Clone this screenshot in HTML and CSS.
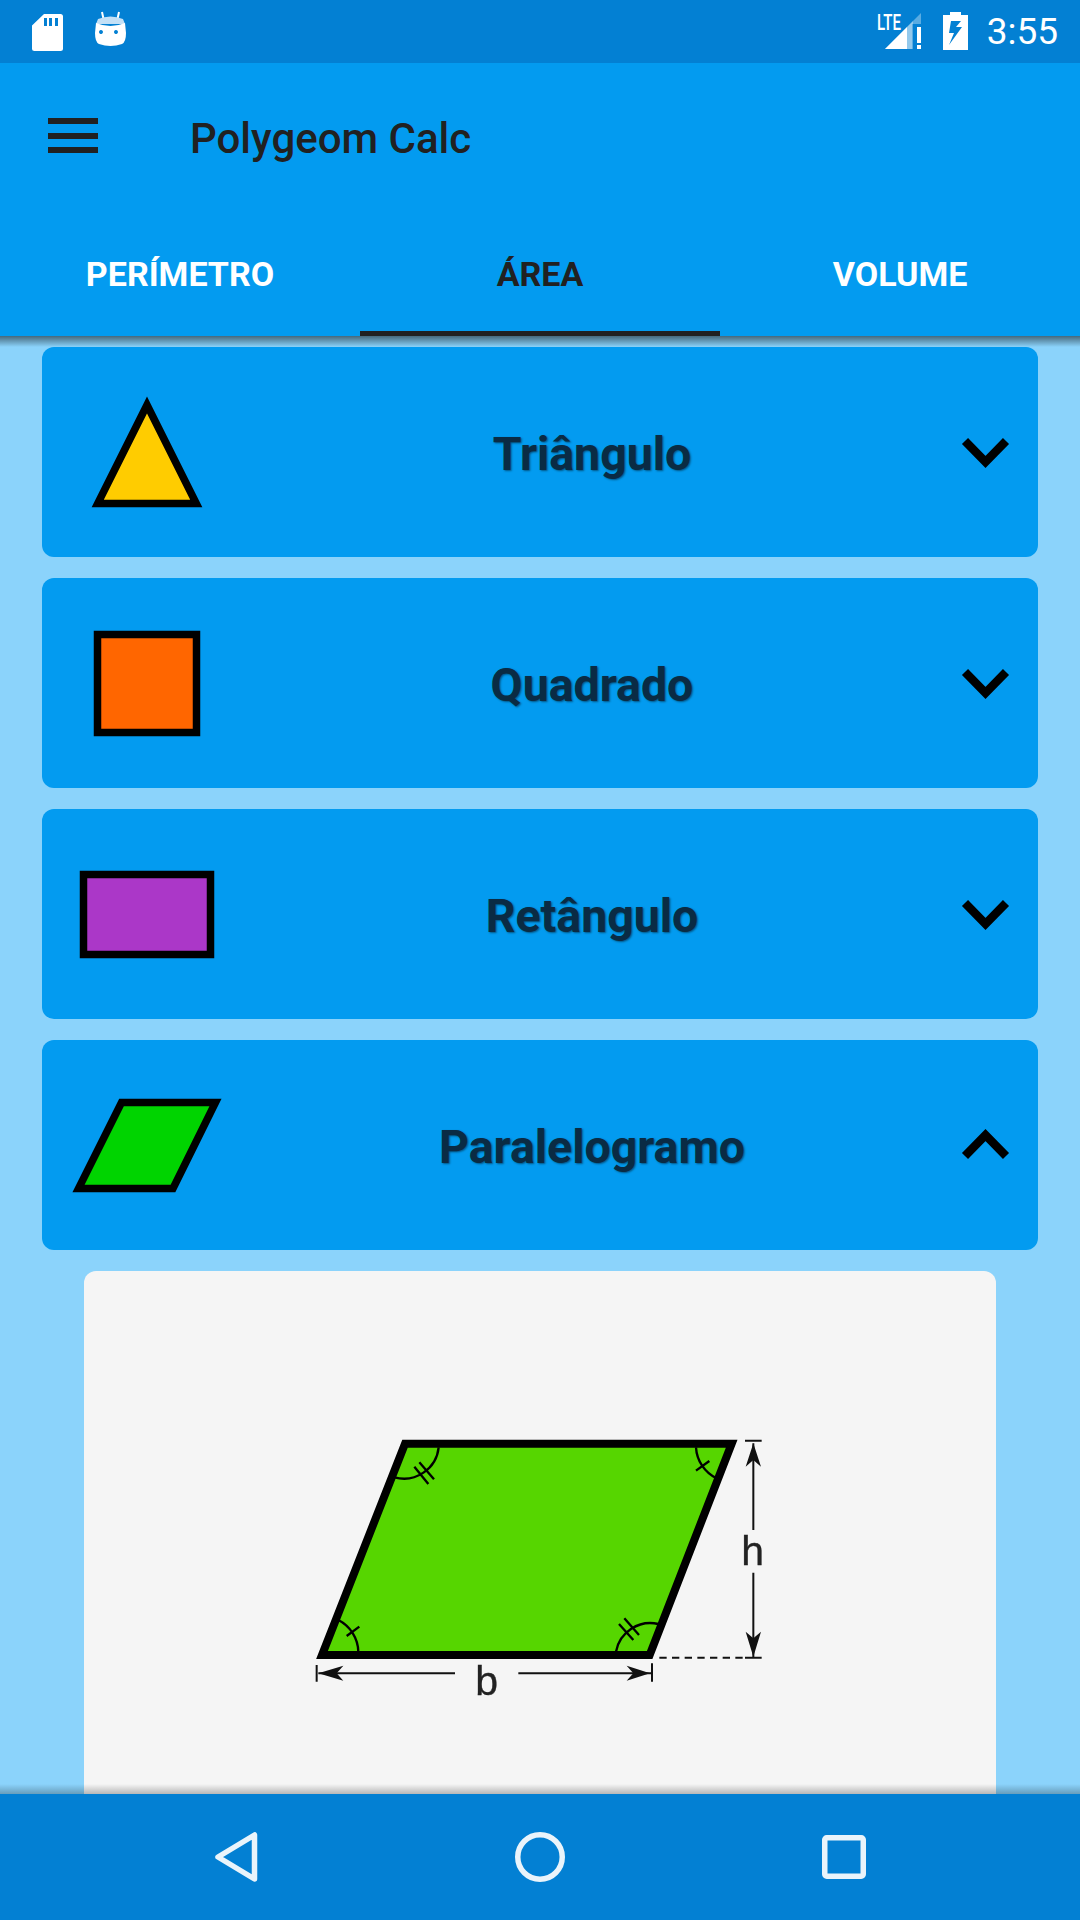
FILE: index.html
```html
<!DOCTYPE html>
<html lang="en">

<head>
    <meta charset="UTF-8">
    <meta name="viewport" content="width=device-width, initial-scale=1.0">
    <title>Polygeom Calc</title>
    <link rel="stylesheet" href="styles.css">
</head>

<body>
    <div class="status-bar">
        <svg class="status-sd" viewBox="0 0 31 37">
            <path fill="#fff" fill-rule="evenodd" d="M12 0H28.5A2.5 2.5 0 0 1 31 2.500V34.500A2.500 2.500 0 0 1 28.500 37H2.500A2.500 2.500 0 0 1 0 34.500V11.500ZM12 4V12H15V4ZM17 4V12H20V4ZM23 4V12H26V4Z" />
        </svg>
        <svg class="status-android" viewBox="0 0 31 36">
            <path fill="none" stroke="#fff" stroke-width="2" d="M7 1L8.500 8M24 1L22.500 8" />
            <path fill="#c3e0f6" d="M3 8Q15.500 3 28 8L30 13H1Z" />
            <path fill="#fff" fill-rule="evenodd" d="M1 12Q15.500 18 30 12L31 22Q31 31 27 33Q15.500 37 4 33Q0 31 0 22ZM8 21A2 2 0 1 0 8 21.100ZM23 21A2 2 0 1 0 23 21.100Z" />
        </svg>
        <span class="status-fill"></span>
        <svg class="status-signal" viewBox="0 0 46 38">
            <text class="status-lte" x="1" y="17.500" textLength="24" lengthAdjust="spacingAndGlyphs">LTE</text>
            <path fill="#fff" fill-opacity=".35" d="M45 1V37H9Z" />
            <path fill="#fff" d="M31 15V37H9Z" />
            <path fill="#0380d3" d="M36 12H46V38H36Z" />
            <path fill="#fff" fill-opacity=".35" d="M31 15L37 9V37H31Z" />
            <path fill="#fff" d="M41 15H45V31H41ZM41 33H45V37H41Z" />
        </svg>
        <svg class="status-battery" viewBox="0 0 25 38">
            <path fill="#fff" fill-rule="evenodd" d="M7 0H18V3H25V38H0V3H7ZM8 9L6 21H11L6 33L19 15H13L18 9Z" />
        </svg>
        <span class="status-time">3:55</span>
    </div>

    <header class="app-bar">
        <div class="toolbar">
            <div class="menu-icon"><span></span><span></span><span></span></div>
            <div class="app-title">Polygeom Calc</div>
        </div>
        <nav class="tabs">
            <div class="tab">PERÍMETRO</div>
            <div class="tab active">ÁREA</div>
            <div class="tab">VOLUME</div>
        </nav>
    </header>

    <main class="content">
        <div class="item">
            <svg class="shape" viewBox="0 0 150 150">
                <polygon points="75,28 25.700,126.500 124.300,126.500" fill="#ffcc00" stroke="#000" stroke-width="7.500" />
            </svg>
            <div class="item-title">Triângulo</div>
            <svg class="chevron" viewBox="0 0 47 30">
                <path d="M3 3L23.500 24L44 3" />
            </svg>
        </div>
        <div class="item">
            <svg class="shape" viewBox="0 0 150 150">
                <rect x="25.500" y="26.500" width="99" height="98" fill="#ff6600" stroke="#000" stroke-width="7.500" />
            </svg>
            <div class="item-title">Quadrado</div>
            <svg class="chevron" viewBox="0 0 47 30">
                <path d="M3 3L23.500 24L44 3" />
            </svg>
        </div>
        <div class="item">
            <svg class="shape" viewBox="0 0 150 150">
                <rect x="11.500" y="35.500" width="127" height="80" fill="#ab37c8" stroke="#000" stroke-width="7.500" />
            </svg>
            <div class="item-title">Retângulo</div>
            <svg class="chevron" viewBox="0 0 47 30">
                <path d="M3 3L23.500 24L44 3" />
            </svg>
        </div>
        <div class="item">
            <svg class="shape" viewBox="0 0 150 150">
                <polygon points="49.500,32.500 143.500,32.500 101,118.500 6.500,118.500" fill="#00d400" stroke="#000" stroke-width="7.500" />
            </svg>
            <div class="item-title">Paralelogramo</div>
            <svg class="chevron" viewBox="0 0 47 30">
                <path d="M3 25L23.500 4L44 25" />
            </svg>
        </div>

        <div class="detail">
            <svg class="diagram" viewBox="0 0 1500 960">
                <polygon points="345,131 1325,131 1079,765 96,765" fill="#56d600" stroke="#000" stroke-width="24" />
                <g fill="none" stroke="#000" stroke-width="7">
                    <path d="M446 142A105 105 0 0 1 313 232M388 187L432 238M373 200L415 252" />
                    <path d="M1218 142A110 110 0 0 0 1280 235M1218 212L1258 183" />
                    <path d="M145 660A110 110 0 0 1 205 755M170 708L208 680" />
                    <path d="M978 755A105 105 0 0 1 1105 672M987 672L1030 720M1003 655L1047 705" />
                </g>
                <g fill="none" stroke="#111" stroke-width="6">
                    <path d="M80 795V845M85 820H495M685 820H1085M1086 790V845" />
                    <path d="M1365 122H1415M1365 773H1415M1390 130V390M1390 518V770" />
                    <path d="M1108 773H1365" stroke-dasharray="22 16" />
                </g>
                <g fill="#111">
                    <polygon points="85,820 160,797 140,820 160,842" />
                    <polygon points="1080,820 1010,797 1030,820 1010,842" />
                    <polygon points="1390,130 1367,200 1390,180 1413,200" />
                    <polygon points="1390,770 1367,695 1390,715 1413,695" />
                </g>
                <text class="diagram-label" x="590" y="885" text-anchor="middle">b</text>
                <text class="diagram-label" x="1388" y="495" text-anchor="middle">h</text>
            </svg>
        </div>
    </main>

    <footer class="nav-bar">
        <svg class="nav-icon" viewBox="0 0 60 60">
            <path d="M48.500 8V52L12 30Z" />
        </svg>
        <svg class="nav-icon" viewBox="0 0 60 60">
            <circle cx="30" cy="30" r="22.250" />
        </svg>
        <svg class="nav-icon" viewBox="0 0 60 60">
            <rect x="10.750" y="10.750" width="38.500" height="38.500" rx="2" />
        </svg>
    </footer>
</body>

</html>
```

FILE: styles.css
```css
body {
    font-family: 'Roboto', sans-serif;
    margin: 0;
    width: 1080px;
    height: 1920px;
    overflow: hidden;
    display: flex;
    flex-direction: column;
    background-color: #8bd3fb;
}

.status-bar {
    height: 63px;
    flex-shrink: 0;
    display: flex;
    align-items: center;
    background-color: #0380d3;
    color: #fff;
    padding: 0 22px 0 32px;
    box-sizing: border-box;
}

.status-sd {
    width: 31px;
    height: 37px;
    margin-top: 1px;
}

.status-android {
    width: 31px;
    height: 36px;
    margin: -6px 0 0 32px;
}

.status-fill {
    flex: 1;
}

.status-signal {
    width: 46px;
    height: 38px;
    margin-top: -1px;
    overflow: visible;
}

.status-lte {
    font-family: 'Roboto', sans-serif;
    font-size: 22px;
    font-weight: 500;
    fill: #fff;
}

.status-battery {
    width: 25px;
    height: 38px;
    margin: -1px 0 0 21px;
}

.status-time {
    font-size: 37px;
    margin-left: 19px;
}

.app-bar {
    position: relative;
    z-index: 2;
    flex-shrink: 0;
    background-color: #039bf0;
}

/* drop shadow under the tabs, only downwards */
.app-bar::after {
    content: "";
    position: absolute;
    top: 100%;
    left: 0;
    right: 0;
    height: 11px;
    background: linear-gradient(rgba(0, 0, 0, 0.5), rgba(0, 0, 0, 0));
}

.toolbar {
    height: 147px;
    display: flex;
    align-items: center;
    padding-left: 48px;
}

.menu-icon {
    width: 50px;
    display: flex;
    flex-direction: column;
    gap: 8.500px;
    margin-top: -2px;
}

.menu-icon span {
    height: 6px;
    background-color: #212121;
}

.app-title {
    margin: 4px 0 0 92px;
    font-size: 42px;
    font-weight: 500;
    color: #212121;
}

.tabs {
    display: flex;
    height: 126px;
}

.tab {
    flex: 1;
    display: flex;
    align-items: center;
    justify-content: center;
    padding-top: 7px;
    box-sizing: border-box;
    border-bottom: 5px solid transparent;
    font-size: 34px;
    font-weight: 700;
    color: #fff;
}

.tab.active {
    color: #212121;
    border-bottom-color: #212121;
}

.content {
    flex: 1;
    min-height: 0;
    overflow: hidden;
    display: flex;
    flex-direction: column;
    gap: 21px;
    padding: 11px 42px 0;
}

.item {
    height: 210px;
    flex-shrink: 0;
    display: flex;
    align-items: center;
    padding: 0 29px 0 30px;
    background-color: #039bf0;
    border-radius: 12px;
}

.shape {
    width: 150px;
    height: 150px;
    flex-shrink: 0;
    filter: blur(0.6px);
}

.item-title {
    flex: 1;
    margin-top: 4px;
    text-align: center;
    font-size: 46.500px;
    font-weight: 700;
    color: #0a2b44;
    text-shadow: 1px 1px 2px rgba(0, 0, 0, 0.45);
}

.chevron {
    width: 47px;
    height: 30px;
    flex-shrink: 0;
    margin-top: 2px;
    overflow: visible;
}

.chevron path {
    fill: none;
    stroke: #000;
    stroke-width: 8.500;
}

.detail {
    flex-shrink: 0;
    height: 700px;
    margin: 0 42px;
    padding-top: 129px;
    box-sizing: border-box;
    display: flex;
    justify-content: center;
    align-items: flex-start;
    background-color: #f5f5f5;
    border-radius: 12px;
}

.diagram {
    width: 500px;
    height: 320px;
    filter: blur(0.7px);
}

.diagram-label {
    font-family: 'Liberation Sans', sans-serif;
    font-size: 123px;
    fill: #222;
    stroke: #222;
    stroke-width: 1;
}

.nav-bar {
    position: relative;
    z-index: 2;
    height: 126px;
    flex-shrink: 0;
    display: flex;
    align-items: center;
    justify-content: center;
    gap: 244px;
    background-color: #0380d3;
}

/* shadow above the nav bar, only upwards */
.nav-bar::before {
    content: "";
    position: absolute;
    bottom: 100%;
    left: 0;
    right: 0;
    height: 10px;
    background: linear-gradient(rgba(0, 0, 0, 0), rgba(0, 0, 0, 0.25));
}

.nav-icon {
    width: 60px;
    height: 60px;
}

.nav-icon path,
.nav-icon circle,
.nav-icon rect {
    fill: none;
    stroke: #eaf4fb;
    stroke-width: 5.500;
    stroke-linejoin: round;
}
```
